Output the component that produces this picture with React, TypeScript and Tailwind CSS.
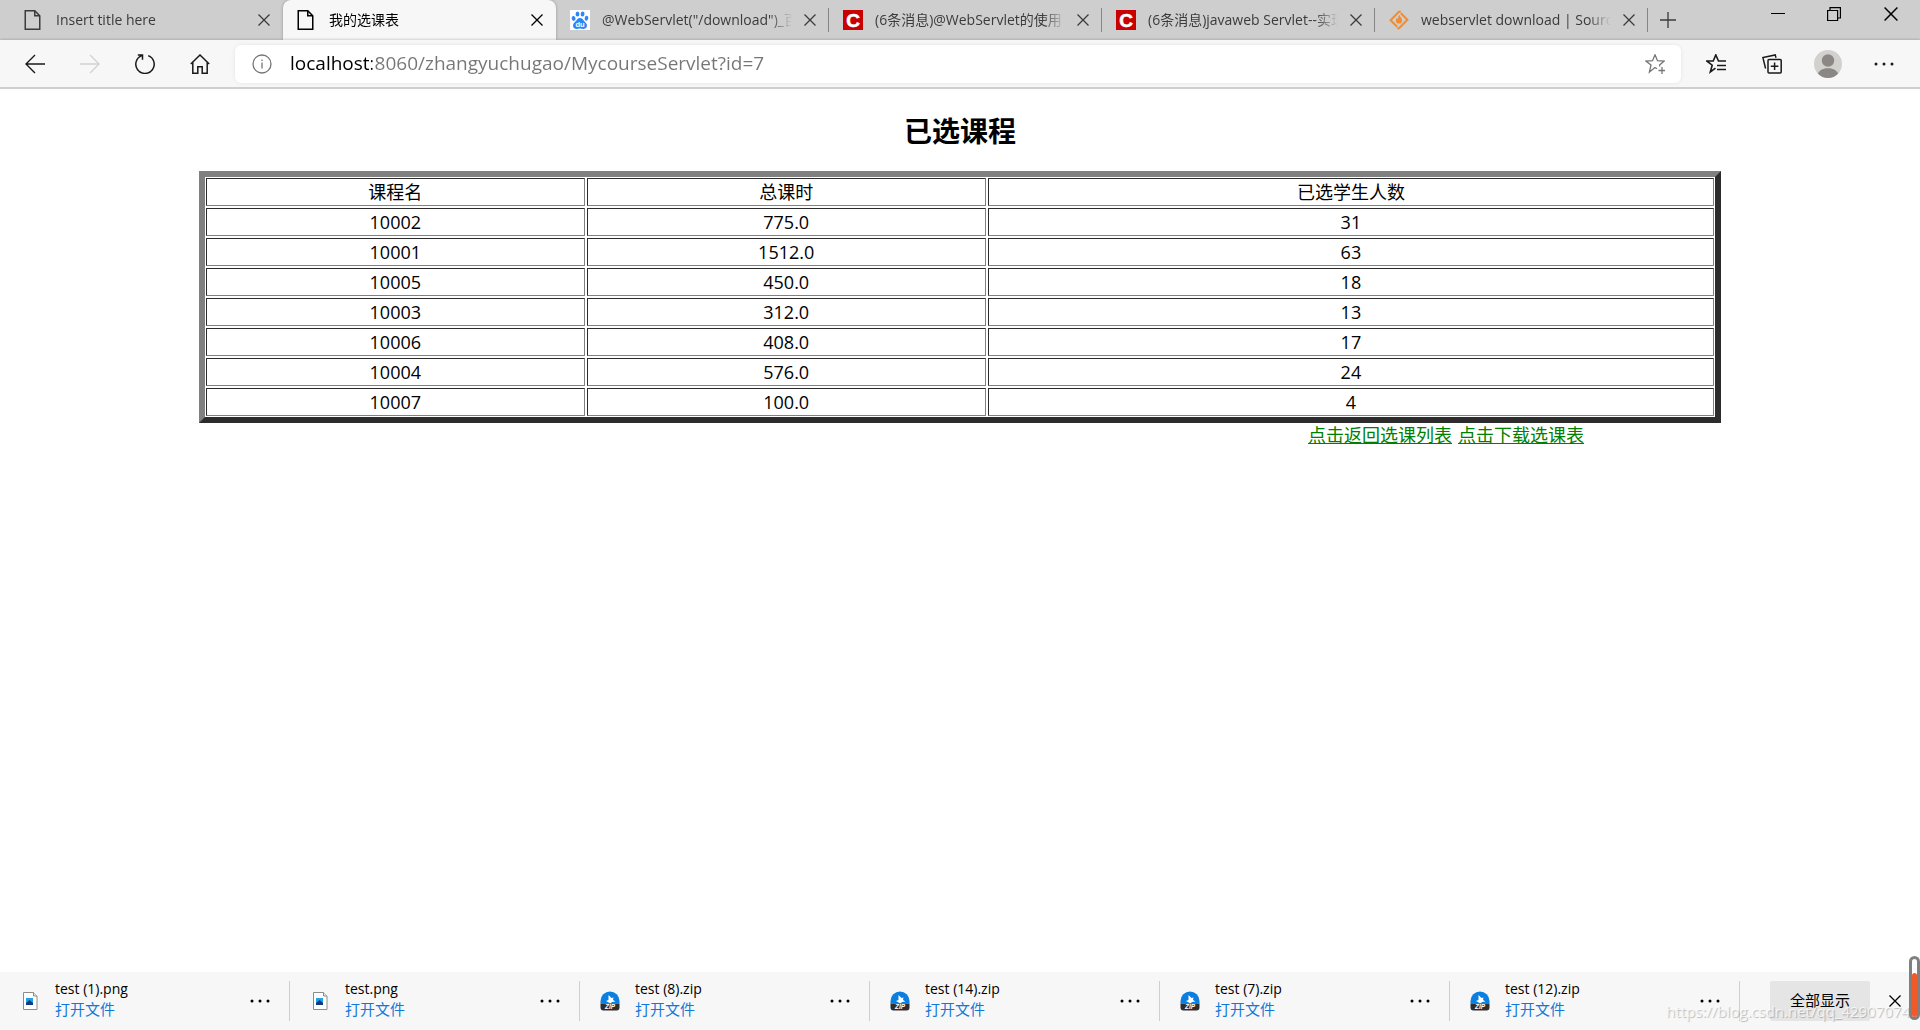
import React, { FunctionComponent, ReactNode } from 'react'

type Tab = {
    id: number,
    title: string,
    icon: ReactNode,
    active?: boolean,
    separator?: boolean,
}

type Course = {
    name: string,
    hours: string,
    students: number,
}

type Download = {
    name: string,
    kind: 'png' | 'zip',
}

const PageIcon = () => (
    <svg viewBox="0 0 20 20" className="h-5 w-5" fill="none" stroke="currentColor" strokeWidth="1.5">
        <path d="M1.250 .75h9.500l5 5v13.500h-14.500z" />
        <path d="M10.750 .75v5h5" />
    </svg>
)

const PawIcon = () => (
    <svg viewBox="0 0 20 20" className="h-5 w-5">
        <rect width="20" height="20" fill="#fff" />
        <g fill="#2f86f6">
            <ellipse cx="3.6" cy="8.4" rx="1.9" ry="2.5" transform="rotate(-12 3.6 8.4)" />
            <ellipse cx="7.5" cy="4" rx="1.9" ry="2.6" />
            <ellipse cx="12.6" cy="4" rx="1.9" ry="2.6" transform="rotate(8 12.6 4)" />
            <ellipse cx="16.5" cy="8.2" rx="1.8" ry="2.5" transform="rotate(12 16.5 8.2)" />
            <path d="M10 8c-2.200-.1-3 1.800-4.300 3.200C4.300 12.700 3 13.600 3 15.500 3 17.600 4.500 18.900 6.500 18.900c1.400 0 2.200-.3 3.500-.3s2.200.3 3.600.3c2 0 3.400-1.300 3.400-3.300 0-2-1.300-2.900-2.700-4.400C13 9.800 12.200 8.100 10 8z" />
        </g>
        <text x="10" y="17.400" textAnchor="middle" fontSize="7.500" fontWeight="700" fill="#fff" fontFamily="Liberation Sans, sans-serif">du</text>
    </svg>
)

const CsdnIcon = () => (
    <svg viewBox="0 0 20 20" className="h-5 w-5">
        <rect width="20" height="20" fill="#c80000" />
        <text x="10.200" y="16.500" textAnchor="middle" fontSize="19" fontWeight="700" fill="#fff" stroke="#fff" strokeWidth=".6" fontFamily="Liberation Sans, sans-serif">C</text>
    </svg>
)

const ForgeIcon = () => (
    <svg viewBox="0 0 20 20" className="h-5 w-5" fill="none" stroke="#f68b2c" strokeWidth="2">
        <path d="M11.800 1.800 9.900 1.800 1.600 10.200 8.200 16.800" />
        <path d="M8.200 18.200h1.900l8.300-8.400L11.800 3.200" />
        <path d="M10.400 4.800c.5 2.100 2.700 3.100 2.700 5.600a3.100 3.100 0 0 1-6.200 0c0-1.500.8-2.200 1.300-3 .1 1 .4 1.500 1 1.700-.2-1.700.2-3 1.200-4.300z" fill="#f68b2c" stroke="none" />
    </svg>
)

const CloseIcon = ({ className }: { className: string }) => (
    <svg viewBox="0 0 12 12" className={className} fill="none" stroke="currentColor" strokeWidth="1.3">
        <path d="M.5.5l11 11M11.500.5l-11 11" />
    </svg>
)

const DotsIcon = () => (
    <svg viewBox="0 0 20 4" className="h-1 w-5" fill="currentColor">
        <circle cx="2" cy="2" r="1.500" />
        <circle cx="10" cy="2" r="1.500" />
        <circle cx="18" cy="2" r="1.500" />
    </svg>
)

const PngIcon = () => (
    <svg viewBox="0 0 20 20" className="h-5 w-5">
        <path d="M3.500 1.500h10l3.500 3.500v13.500h-13.500z" fill="#fff" stroke="#8c8c8c" />
        <path d="M13.500 1.500v3.500h3.500" fill="#e8e8e8" stroke="#8c8c8c" />
        <rect x="6" y="7" width="7" height="7" fill="#1fa2ea" />
        <path d="M6 14v-2l3.500-3 3.500 3v2z" fill="#123a7c" />
    </svg>
)

const ZipIcon = () => (
    <svg viewBox="0 0 20 20" className="h-5 w-5">
        <path d="M.5 12.500v-2.500a9.500 9.500 0 0 1 19 0v2.500z" fill="#0b7fe0" />
        <path d="M8.500 4l3 3 2-.5-.5 2.500 2.500 1.500-3.500.5-1.500 1.500-4.500-2.500 2.500-1z" fill="#fff" />
        <path d="M.5 12.500h19v4a3 3 0 0 1-3 3h-13a3 3 0 0 1-3-3z" fill="#2e2e2e" />
        <text x="10" y="18.400" textAnchor="middle" fontSize="6.500" fontWeight="700" fontStyle="italic" fill="#fff" fontFamily="Liberation Sans, sans-serif">ZIP</text>
    </svg>
)

const tabs: Tab[] = [
    { id: 1, title: 'Insert title here', icon: <PageIcon /> },
    { id: 2, title: '我的选课表', icon: <PageIcon />, active: true },
    { id: 3, title: '@WebServlet("/download")_百度搜索', icon: <PawIcon />, separator: true },
    { id: 4, title: '(6条消息)@WebServlet的使用', icon: <CsdnIcon />, separator: true },
    { id: 5, title: '(6条消息)javaweb Servlet--实现', icon: <CsdnIcon />, separator: true },
    { id: 6, title: 'webservlet download | SourceForge', icon: <ForgeIcon />, separator: true },
]

const courses: Course[] = [
    { name: '10002', hours: '775.0', students: 31 },
    { name: '10001', hours: '1512.0', students: 63 },
    { name: '10005', hours: '450.0', students: 18 },
    { name: '10003', hours: '312.0', students: 13 },
    { name: '10006', hours: '408.0', students: 17 },
    { name: '10004', hours: '576.0', students: 24 },
    { name: '10007', hours: '100.0', students: 4 },
]

const downloads: Download[] = [
    { name: 'test (1).png', kind: 'png' },
    { name: 'test.png', kind: 'png' },
    { name: 'test (8).zip', kind: 'zip' },
    { name: 'test (14).zip', kind: 'zip' },
    { name: 'test (7).zip', kind: 'zip' },
    { name: 'test (12).zip', kind: 'zip' },
]

const TabStrip: FunctionComponent = () => (
    <div className="flex h-10 bg-[#cecece] pl-2.5 text-[#3b3b3b]">
        {tabs.map((tab) => (
            <div
                key={tab.id}
                className={tab.active
                    ? 'flex w-[273px] items-center rounded-t-lg bg-[#f7f7f7] pl-3.5 text-black shadow-[0_0_3px_rgba(0,0,0,0.3)]'
                    : 'flex w-[273px] items-center pl-3.5'}
            >
                {tab.icon}
                <span className="ml-3 flex-1 overflow-hidden whitespace-nowrap text-sm [mask-image:linear-gradient(to_right,black_88%,transparent)]">
                    {tab.title}
                </span>
                <button type="button" aria-label="关闭标签页" className="ml-2 flex w-5 justify-center">
                    <CloseIcon className="h-3 w-3" />
                </button>
                <span className={tab.separator ? 'ml-2 h-6 w-px bg-[#858585]' : 'ml-2 w-px'} />
            </div>
        ))}
        <button type="button" aria-label="新建标签页" className="flex w-10 items-center justify-center">
            <svg viewBox="0 0 16 16" className="h-4 w-4" stroke="currentColor" strokeWidth="1.300">
                <path d="M8 0v16M0 8h16" />
            </svg>
        </button>
        <div className="ml-auto flex h-7 items-center text-black">
            <button type="button" aria-label="最小化" className="flex w-14 justify-center">
                <svg viewBox="0 0 14 14" className="h-3.5 w-3.5" stroke="currentColor">
                    <path d="M0 6.500h14" />
                </svg>
            </button>
            <button type="button" aria-label="还原" className="flex w-14 justify-center">
                <svg viewBox="0 0 14 14" className="h-3.5 w-3.5" fill="none" stroke="currentColor" strokeWidth="1.200">
                    <path d="M.6 3.500h10v10h-10zM3 3.500v-2.900h10.400v10.400h-2.800" />
                </svg>
            </button>
            <button type="button" aria-label="关闭" className="flex w-[58px] justify-center">
                <CloseIcon className="h-3.5 w-3.5" />
            </button>
        </div>
    </div>
)

const Toolbar: FunctionComponent = () => (
    <div className="flex h-[49px] items-center border-b-2 border-[#cecece] bg-[#f7f7f7] pl-[7px] text-[#1a1a1a] shadow-[0_-1px_2px_rgba(0,0,0,0.15)]">
        <button type="button" aria-label="后退" className="flex w-[55px] justify-center">
            <svg viewBox="0 0 20 20" className="h-5 w-5" fill="none" stroke="currentColor" strokeWidth="1.400">
                <path d="M20 10H1M10 1l-9 9 9 9" />
            </svg>
        </button>
        <button type="button" aria-label="前进" className="flex w-[55px] justify-center text-[#d2d2d2]">
            <svg viewBox="0 0 20 20" className="h-5 w-5" fill="none" stroke="currentColor" strokeWidth="1.400">
                <path d="M0 10h19M10 1l9 9-9 9" />
            </svg>
        </button>
        <button type="button" aria-label="刷新" className="flex w-[55px] justify-center">
            <svg viewBox="0 0 20 20" className="h-5 w-5" fill="none" stroke="currentColor" strokeWidth="1.500">
                <path d="M13.200 1.600a9.200 9.200 0 1 1-6.400 0M2.800.9h4.700v4.800" />
            </svg>
        </button>
        <button type="button" aria-label="主页" className="flex w-[55px] justify-center">
            <svg viewBox="0 0 20 20" className="h-5 w-5" fill="none" stroke="currentColor" strokeWidth="1.500">
                <path d="M.8 10 10 1l9.200 9M2.800 8.500v10.700h5v-6.400h4.400v6.400h5V8.500" />
            </svg>
        </button>
        <div className="ml-2 flex h-[38px] flex-1 items-center rounded-md bg-white pl-[17px] pr-4 text-[#767676] shadow-[0_0_4px_rgba(0,0,0,0.08)]">
            <svg viewBox="0 0 20 20" className="h-5 w-5" fill="none" stroke="currentColor" strokeWidth="1.300">
                <circle cx="10" cy="10" r="9" />
                <path d="M10 8.500v6M10 5.500v1.500" />
            </svg>
            <input
                type="text"
                aria-label="地址栏"
                defaultValue="localhost:8060/zhangyuchugao/MycourseServlet?id=7"
                className="ml-[18px] flex-1 bg-linear-to-r from-black from-[82px] to-[#767676] to-[82px] bg-clip-text text-[19px] text-transparent outline-none"
            />
            <button type="button" aria-label="添加到收藏夹">
                <svg viewBox="0 0 20 20" className="h-5 w-5" fill="none" stroke="currentColor" strokeWidth="1.300">
                    <path d="M10 13.500l-5.600 4.500 1.600-7L.9 7.100l6.600-.4L10 .8l2.500 5.900 6.600.4-4.500 3.800.2 1.600M10 13.500l2 1.200" />
                    <path d="M17 13v7M13.500 16.500h6.500" />
                </svg>
            </button>
        </div>
        <div className="flex items-center pl-[7px] pr-2">
            <button type="button" aria-label="收藏夹" className="flex w-14 justify-center">
                <svg viewBox="0 0 20 20" className="h-5 w-5" fill="none" stroke="currentColor" strokeWidth="1.600">
                    <path d="M20 7h-7.500L9.800.9 7.200 7H.8l5.400 4.200L4.300 18l5.200-3.800M11 11.500h9M11 15.500h9" />
                </svg>
            </button>
            <button type="button" aria-label="集锦" className="flex w-14 justify-center">
                <svg viewBox="0 0 20 20" className="h-5 w-5" fill="none" stroke="currentColor" strokeWidth="1.500">
                    <rect x="6" y="5.500" width="13.200" height="13.500" rx="1" />
                    <path d="M12.600 8.500v7.500M8.800 12.200h7.600M3.600 14.500.9 3.600 13.200.9l.8 2.800" />
                </svg>
            </button>
            <button type="button" aria-label="个人资料" className="flex w-14 justify-center">
                <svg viewBox="0 0 28 28" className="h-7 w-7">
                    <circle cx="14" cy="14" r="14" fill="#d3d1ce" />
                    <circle cx="14" cy="10.500" r="6.200" fill="#8b8785" />
                    <path d="M4 23.700C5.500 20 9.500 18.300 14 18.300s8.500 1.700 10 5.400A14 14 0 0 1 4 23.700z" fill="#8b8785" />
                </svg>
            </button>
            <button type="button" aria-label="设置及其他" className="flex w-14 justify-center">
                <DotsIcon />
            </button>
        </div>
    </div>
)

const cellStyle = 'h-7 border border-t-[#2c2c2c] border-l-[#2c2c2c] border-r-[#808080] border-b-[#808080] p-0 text-center font-normal'

const CourseTable: FunctionComponent = () => (
    <div className="mx-auto w-[79.3%] border-6 border-t-[#808080] border-l-[#808080] border-r-[#2c2c2c] border-b-[#2c2c2c]">
        <div className="-m-px">
            <table className="w-full table-fixed border-separate border-spacing-0.5 text-lg leading-[26px]">
                <thead>
                    <tr>
                        <th scope="col" className={`${cellStyle} w-[25.2%]`}>课程名</th>
                        <th scope="col" className={`${cellStyle} w-[26.5%]`}>总课时</th>
                        <th scope="col" className={cellStyle}>已选学生人数</th>
                    </tr>
                </thead>
                <tbody>
                    {courses.map((course) => (
                        <tr key={course.name}>
                            <td className={cellStyle}>{course.name}</td>
                            <td className={cellStyle}>{course.hours}</td>
                            <td className={cellStyle}>{course.students}</td>
                        </tr>
                    ))}
                </tbody>
            </table>
        </div>
    </div>
)

const DownloadBar: FunctionComponent = () => (
    <div className="relative flex h-[58px] items-center bg-[#f7f7f7] text-sm">
        {downloads.map((file) => (
            <div key={file.name} className="flex h-10 w-[290px] items-center border-r border-[#cfcfcf] pl-5">
                {file.kind === 'png' ? <PngIcon /> : <ZipIcon />}
                <div className="ml-[15px] flex flex-1 flex-col pb-1">
                    <span className="h-5 text-sm leading-4">{file.name}</span>
                    <a href="#open" className="text-[15px] leading-4 text-[#1278d8]">打开文件</a>
                </div>
                <button type="button" aria-label="更多选项" className="mr-[19px]">
                    <DotsIcon />
                </button>
            </div>
        ))}
        <button type="button" className="ml-auto h-10 w-[100px] rounded-xs bg-[#e5e5e5] text-[15px]">全部显示</button>
        <button type="button" aria-label="关闭下载栏" className="flex w-[50px] justify-center">
            <CloseIcon className="h-3 w-3" />
        </button>
        <span className="pointer-events-none absolute right-2.5 bottom-2 text-[15px] text-white/70 [text-shadow:1px_1px_1px_rgba(0,0,0,0.25)]">
            https://blog.csdn.net/qq_42907074
        </span>
        <div className="absolute right-0 bottom-2.5 flex h-16 w-[11px] items-end rounded-full border-3 border-[#808080] bg-white">
            <div className="h-11 w-full rounded-full bg-[#f05a28]" />
        </div>
    </div>
)

const App: FunctionComponent = () => {
    return (
        <div className="flex min-h-screen flex-col overflow-hidden bg-white font-['Open_Sans','Noto_Sans_CJK_SC',sans-serif] text-black">
            <TabStrip />
            <Toolbar />
            <main className="flex-1 pt-6">
                <h2 className="mb-[22px] text-center text-[28px] leading-9 font-bold">已选课程</h2>
                <CourseTable />
                <p className="flex justify-end gap-1.5 pr-[17.5%] text-lg leading-6 text-[#008000]">
                    <a href="#list" className="underline">点击返回选课列表</a>
                    <a href="#download" className="underline">点击下载选课表</a>
                </p>
            </main>
            <DownloadBar />
        </div>
    )
}

export default App
